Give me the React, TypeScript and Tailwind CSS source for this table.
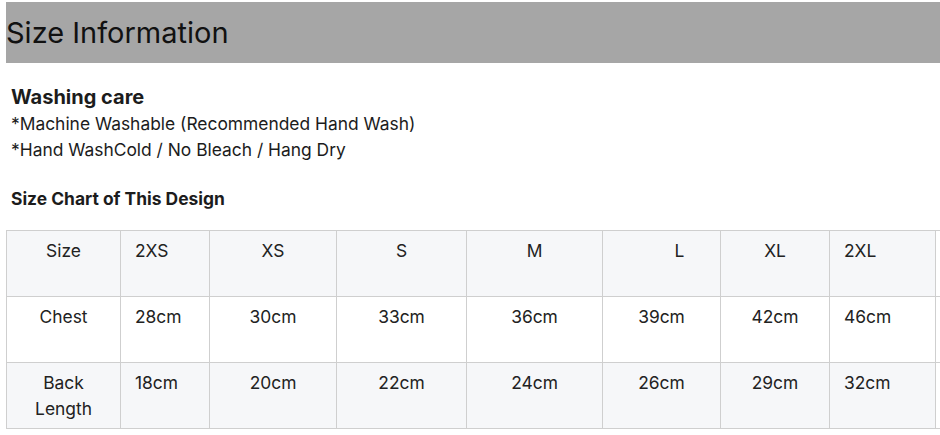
const sizes = ["2XS", "XS", "S", "M", "L", "XL", "2XL"];

const rows = [
  { label: "Chest", values: ["28cm", "30cm", "33cm", "36cm", "39cm", "42cm", "46cm"], bg: "bg-white" },
  { label: "Back Length", values: ["18cm", "20cm", "22cm", "24cm", "26cm", "29cm", "32cm"], bg: "bg-[#f6f7f9]" },
];

// per column: width and text placement as in the shop's table
const cols = [
  { w: "w-[89px]", cls: "text-left pl-[14px]" },
  { w: "w-[127px]", cls: "text-center" },
  { w: "w-[130px]", cls: "text-center" },
  { w: "w-[136px]", cls: "text-center" },
  { w: "w-[118px]", cls: "text-center" },
  { w: "w-[109px]", cls: "text-center" },
  { w: "w-[106px]", cls: "text-left pl-[14px]" },
];

const cell = "h-[66px] border border-[#cfcfcf] align-top pt-[7px] text-[17.4px] leading-[26px]";

export default function App() {
  return (
    <div className="w-[940px] h-[435px] overflow-hidden bg-white pt-[2px] pl-[6px] text-[#1c1c1c] font-['Inter',sans-serif]">
      <div className="h-[61px] bg-[#a6a6a6] flex items-center">
        <h1 className="text-[29px] leading-none font-normal text-[#111] pb-[1px]">Size Information</h1>
      </div>

      <div className="pl-[5px] pt-[21px]">
        <h2 className="text-[20px] leading-[27px] font-bold">Washing care</h2>
        <p className="text-[17.4px] leading-[26px]">*Machine Washable (Recommended Hand Wash)</p>
        <p className="text-[17.4px] leading-[26px]">*Hand WashCold / No Bleach / Hang Dry</p>
        <h3 className="mt-[23px] text-[17.4px] leading-[26px] font-bold">Size Chart of This Design</h3>
      </div>

      <table className="mt-[18px] border-collapse table-fixed w-[1000px] text-[#222]">
        <tbody>
          <tr className="bg-[#f6f7f9]">
            <td className={`${cell} w-[114px] text-center`}>Size</td>
            {sizes.map((s, i) => (
              <td key={s} className={`${cell} ${cols[i].w} ${s === "L" ? "text-center pl-[36px]" : cols[i].cls}`}>
                {s}
              </td>
            ))}
            <td className={`${cell} bg-white`}></td>
          </tr>
          {rows.map((r) => (
            <tr key={r.label} className={r.bg}>
              <td className={`${cell} text-center px-[22px]`}>{r.label}</td>
              {r.values.map((v, i) => (
                <td key={v} className={`${cell} ${cols[i].cls}`}>
                  {v}
                </td>
              ))}
              <td className={`${cell} bg-white`}></td>
            </tr>
          ))}
        </tbody>
      </table>
    </div>
  );
}
